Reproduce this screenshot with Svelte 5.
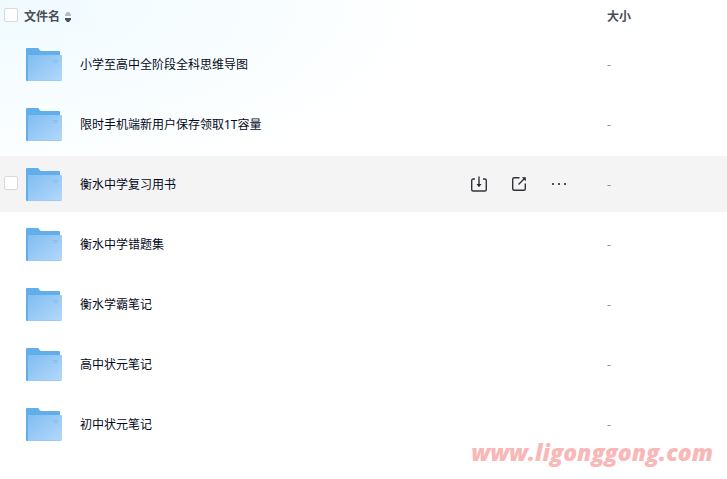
<script>
	const files = [
		'小学至高中全阶段全科思维导图',
		'限时手机端新用户保存领取1T容量',
		'衡水中学复习用书',
		'衡水中学错题集',
		'衡水学霸笔记',
		'高中状元笔记',
		'初中状元笔记'
	]

	let active = $state(2)
	let selected = $state([])
	let descending = $state(true)

	function toggleAll(e) {
		selected = e.currentTarget.checked ? [...files] : []
	}
</script>

<main>
	<table>
		<thead>
			<tr>
				<th class="check">
					<input type="checkbox" aria-label="全选" checked={selected.length === files.length} onchange={toggleAll} />
				</th>
				<th>
					<button class="sort" onclick={() => (descending = !descending)}>
						文件名
						<svg width="8" height="10" viewBox="0 0 8 10" aria-hidden="true">
							<path d="M3 0h2l2 2.500V4H1V2.500z" fill={descending ? '#b8bbbe' : '#505256'} />
							<path d="M1 6h6v1.500L5 10H3L1 7.500z" fill={descending ? '#505256' : '#b8bbbe'} />
						</svg>
					</button>
				</th>
				<th class="size">大小</th>
			</tr>
		</thead>
		<tbody>
			{#each files as name, i}
				<tr class:active={active === i} onmouseenter={() => (active = i)}>
					<td class="check">
						<input type="checkbox" aria-label={name} value={name} bind:group={selected} />
					</td>
					<td>
						<div class="file">
							<svg class="folder" viewBox="0 0 36 34" aria-hidden="true">
								<defs>
									<linearGradient id="front-{i}" x1="0" y1="0" x2="1" y2="1">
										<stop offset="0" stop-color="#80bdf1" />
										<stop offset="1" stop-color="#b3d8fb" />
									</linearGradient>
								</defs>
								<path d="M1 0h10.500q1 0 1.600 1.200Q14 3 15 3h18q1 0 1 1v29H1q-1 0-1-1V1q0-1 1-1z" fill="#62aeeb" />
								<path d="M2 7h33q1 0 1 1v24q0 1-1 1H2z" fill="url(#front-{i})" />
								<path d="M2 32.500h33" stroke="#9ccaf5" />
								<path d="M27 12.500h5M27 14.500h5" stroke="#86bdf2" />
							</svg>
							<a href="#{i}">{name}</a>
							{#if active === i}
								<div class="actions">
									<button aria-label="下载">
										<svg viewBox="0 0 16 16">
											<path d="M4 3H2.200Q.7 3 .7 4.500V13.500Q.7 15 2.200 15h11.600q1.500 0 1.500-1.500V4.500Q15.300 3 13.800 3H12M8 .5v9" />
											<path class="solid" d="M5.500 8h5L8 11.200z" />
										</svg>
									</button>
									<button aria-label="分享">
										<svg viewBox="0 0 16 16">
											<path d="M8.500 1.700H3.200q-1.500 0-1.500 1.500v9.600q0 1.500 1.500 1.500h9.600q1.500 0 1.500-1.500V7.500M7.500 8.500l6-6" />
											<path class="solid" d="M10.800 1.200h4v4z" />
										</svg>
									</button>
									<button aria-label="更多">
										<svg viewBox="0 0 16 16">
											<g class="solid">
												<circle cx="2" cy="8" r="1.100" />
												<circle cx="8" cy="8" r="1.100" />
												<circle cx="14" cy="8" r="1.100" />
											</g>
										</svg>
									</button>
								</div>
							{/if}
						</div>
					</td>
					<td class="size">-</td>
				</tr>
			{/each}
		</tbody>
	</table>
	<span class="watermark">www.ligonggong.com</span>
</main>

<style>
	:global(body) {
		background: #fff;
	}
	main {
		position: relative;
		min-height: 100vh;
		font: 12px/18px "Noto Sans", "Noto Sans CJK SC", sans-serif;
		color: #03081a;
		background: radial-gradient(ellipse 440px 190px at 0 0, #effaff, #f7fdff 50%, #fff) no-repeat;
	}
	table {
		width: 100%;
		table-layout: fixed;
		border-spacing: 0 4px;
	}
	th,
	td {
		box-sizing: border-box;
		padding: 2px 0 0;
		text-align: left;
	}
	th {
		height: 28px;
		padding-bottom: 4px;
		color: #494e57;
		font-weight: 700;
	}
	td {
		height: 56px;
	}
	.check {
		width: 24px;
	}
	.size {
		width: 120px;
	}
	td.size {
		color: #878c9c;
	}
	.active td {
		background: #f4f4f4;
	}
	input {
		appearance: none;
		display: block;
		box-sizing: border-box;
		width: 14px;
		height: 14px;
		margin: 0 0 4px 4px;
		border: 1px solid #d9d9d9;
		border-radius: 2px;
		background: #fff;
	}
	input:checked {
		background: #06a7ff;
	}
	tbody tr:not(.active) input:not(:checked) {
		opacity: 0;
	}
	button {
		display: flex;
		align-items: center;
		padding: 0;
		border: 0;
		background: none;
		color: inherit;
		font: inherit;
		cursor: pointer;
	}
	.sort {
		gap: 4px;
	}
	.file {
		display: flex;
		align-items: center;
		padding: 0 40px 0 2px;
	}
	.folder {
		width: 36px;
		height: 34px;
		margin-right: 18px;
	}
	a {
		color: inherit;
		text-decoration: none;
	}
	.actions {
		display: flex;
		gap: 24px;
		margin-left: auto;
		padding-bottom: 2px;
	}
	.actions svg {
		width: 16px;
		height: 16px;
		fill: none;
		stroke: #303238;
		stroke-width: 1.4;
	}
	.actions .solid {
		fill: #25262b;
		stroke: none;
	}
	.watermark {
		position: absolute;
		right: 14px;
		bottom: 12px;
		color: #f9b8b8;
		font: italic 800 23px/30px "Open Sans", sans-serif;
		pointer-events: none;
	}
</style>
